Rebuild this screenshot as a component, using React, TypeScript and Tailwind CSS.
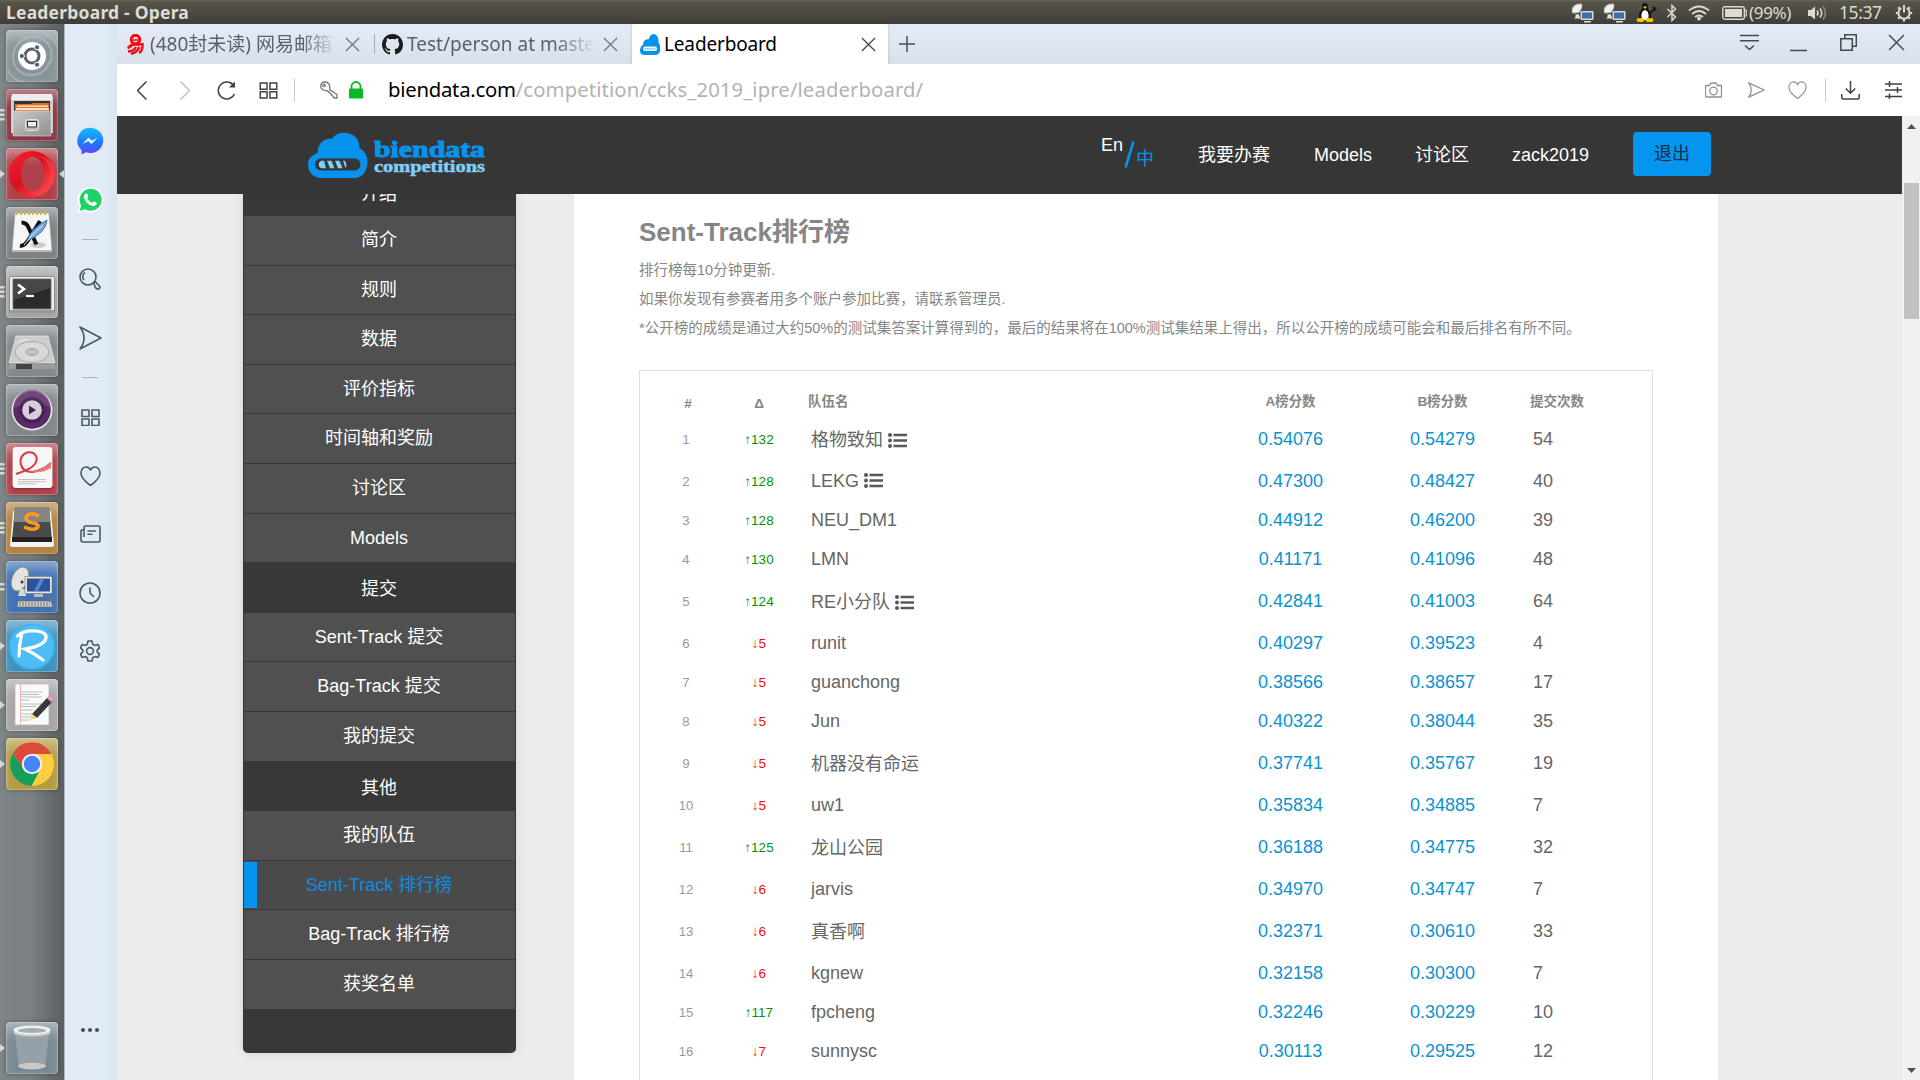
import React from "react";

const PAGE_FONT = "font-['Liberation_Sans','Noto_Sans_CJK_SC',sans-serif]";
const UI_FONT = "font-['Noto_Sans','Noto_Sans_CJK_SC',sans-serif]";

/* ---------- Desktop panel ---------- */

function DishIcon() {
  return (
    <svg width="24" height="20" viewBox="0 0 24 20">
      <path d="M1.500 10C0 4 4 .5 10.500 1Q12 4 8 9.500Z" fill="#efefeb" stroke="#c9c9c5" strokeWidth=".6" />
      <path d="M1.500 10q2 2.500 6 1l2 4.500H3.500l1.500-3z" fill="#e4e4e0" />
      <rect x="9.500" y="8" width="13" height="9" rx="1" fill="#d8d8d4" />
      <rect x="11" y="9.500" width="10" height="6" fill="#3d6db0" />
      <path d="M13 18h7v1.500h-7z" fill="#ddd" />
    </svg>
  );
}

function TopPanel() {
  return (
    <div className={`flex h-6 w-full shrink-0 items-center border-t border-[#65624f] bg-gradient-to-b from-[#59574c] to-[#3e3d38] text-[#dfdbd2] ${UI_FONT}`}>
      <span className="ml-[6px] whitespace-nowrap text-[17.5px] leading-none font-bold tracking-[0.012em]">Leaderboard - Opera</span>
      <div className="ml-auto flex h-full items-center">
        <DishIcon />
        <span className="w-2" />
        <DishIcon />
        <svg className="ml-[9px]" width="22" height="21" viewBox="0 0 22 21">
          <path d="M9 1c3 0 3 3 3 5s3 4 3 8-2 5-6 5-6-1-6-5 3-6 3-8 0-5 3-5z" fill="#111" />
          <path d="M9 8c3 1 4 4 3.500 7S10 18 9 18s-3 0-3.500-3S6 9 9 8z" fill="#fff" />
          <path d="M7 5l2-1 2 1-2 2z" fill="#f5b800" />
          <ellipse cx="4.500" cy="18" rx="4" ry="2" fill="#f7c600" />
          <ellipse cx="13.500" cy="18" rx="4" ry="2" fill="#f7c600" />
          <path d="M13 12l7-6M17 5l3 3" stroke="#181818" strokeWidth="2" />
        </svg>
        <svg className="ml-[8px]" width="12" height="18" viewBox="0 0 12 18" fill="none" stroke="#dfdbd2" strokeWidth="1.500">
          <path d="M1.500 5l8 8L6 16.500v-15L9.500 5l-8 8" />
        </svg>
        <svg className="ml-[10px]" width="22" height="16" viewBox="0 0 22 16" fill="none" stroke="#dfdbd2" strokeWidth="1.800">
          <path d="M1 5.500Q11-2.500 21 5.500M4 9Q11 3 18 9M7 12Q11 9 15 12" />
          <circle cx="11" cy="13.500" r="1" fill="#dfdbd2" />
        </svg>
        <svg className="ml-[12px]" width="26" height="14" viewBox="0 0 26 14">
          <rect x=".8" y=".8" width="21.500" height="12.400" rx="2" fill="none" stroke="#dfdbd2" strokeWidth="1.400" />
          <rect x="3" y="3" width="17" height="8" fill="#dfdbd2" />
          <path d="M22.500 4h1.800v6h-1.800" fill="none" stroke="#dfdbd2" strokeWidth="1.200" />
        </svg>
        <span className="ml-px w-[46px] text-[17px] leading-none tracking-[-0.02em] whitespace-nowrap">(99%)</span>
        <svg className="ml-[12px]" width="21" height="16" viewBox="0 0 21 16" fill="none" stroke="#dfdbd2" strokeWidth="1.600">
          <path d="M1 5h3l4-3.500v13L4 11H1z" fill="#dfdbd2" stroke="none" />
          <path d="M10 5.500q2 2.500 0 5M13 3.500q3.500 4.500 0 9" />
          <path d="M16 1.500q5 6.500 0 13" stroke="#8d8a80" />
        </svg>
        <span className="ml-[11px] w-[44px] text-[17.5px] leading-none tracking-[-0.025em]">15:37</span>
        <svg className="mr-[7px] ml-[12px]" width="18" height="18" viewBox="0 0 18 18" fill="none" stroke="#dfdbd2">
          <path d="M6.200 4.200a5.600 5.600 0 1 0 5.600 0" strokeWidth="2" />
          <path d="M9 1v7.500" strokeWidth="2" />
          <path d="M.8 9h2M15.200 9h2M3.200 14.800l1.500-1.500M14.800 14.800l-1.500-1.500M3.200 3.200l1.500 1.500M14.800 3.200l-1.500 1.500M9 15v2.500" strokeWidth="2.200" />
        </svg>
      </div>
    </div>
  );
}

/* ---------- Launcher ---------- */

type Mark = "none" | "arrow" | "two" | "three";

function Tile({ bg, mark = "none", active, children }: { bg: string; mark?: Mark; active?: boolean; children: React.ReactNode }) {
  return (
    <div className={`relative ml-[6px] h-[52px] w-[52px] shrink-0 rounded-[4px] shadow-[0_0_4px_rgba(0,0,0,0.35),inset_0_0_0_1px_rgba(255,255,255,0.25),inset_0_12px_12px_-4px_rgba(255,255,255,0.4)] ${bg}`}>
      <svg width="52" height="52" viewBox="0 0 52 52" className="block">{children}</svg>
      {mark !== "none" && (
        <svg className="absolute top-[19px] left-[-6px]" width="5" height="14" viewBox="0 0 5 14" fill="#d6d6d6">
          {mark === "arrow" && <path d="M0 3l5 4-5 4z" />}
          {mark === "two" && <path d="M0 3h4l1 1.300-1 1.300H0zM0 8h4l1 1.300-1 1.300H0z" />}
          {mark === "three" && <path d="M0 1h4l1 1.200-1 1.300H0zM0 5.500h4l1 1.200L4 8H0zM0 10h4l1 1.200-1 1.300H0z" />}
        </svg>
      )}
      {active && (
        <svg className="absolute top-[21px] left-[53px]" width="5" height="10" viewBox="0 0 5 10"><path d="M5 1v8L0 5z" fill="#d6d6d6" /></svg>
      )}
    </div>
  );
}

function Launcher() {
  return (
    <div className="flex w-[65px] shrink-0 flex-col gap-[7px] border-r border-[#aeb3b5] bg-gradient-to-r from-[#7f8687] via-[#7a7f81] to-[#5a5f61] pt-[6px] pb-[6px]">
      <Tile bg="bg-[#87949a]">
        <path d="M8 20Q16 3 35 8Q50 16 44 34M44 32Q36 49 18 44Q4 37 8 20M2 40Q6 50 18 52M34 0Q46 6 52 16" fill="none" stroke="#b6c0c4" strokeWidth="2" opacity=".6" />
        <circle cx="26" cy="26" r="14" fill="#fff" />
        <circle cx="26" cy="26" r="7" fill="none" stroke="#566167" strokeWidth="3" />
        <g fill="#566167" stroke="#fff" strokeWidth="1">
          <circle cx="15.800" cy="26" r="2.600" />
          <circle cx="31" cy="17.300" r="2.600" />
          <circle cx="31" cy="34.700" r="2.600" />
        </g>
      </Tile>
      <Tile bg="bg-[#8c3645]" mark="three">
        <defs>
          <linearGradient id="cab" x1="0" y1="0" x2="1" y2="1"><stop offset="0" stopColor="#c9c9c9" /><stop offset="1" stopColor="#8f8f8f" /></linearGradient>
        </defs>
        <path d="M6 5h40l1 8v31H5V13z" fill="#cfcfcf" />
        <path d="M6 5h40l1 6H5z" fill="#ededed" />
        <rect x="8" y="12" width="36" height="11" fill="#333" />
        <path d="M9 15h16l1-1h17v8H9z" fill="#e0702a" />
        <path d="M11 16.500h31v1.500H11zM10 19h33v2H10z" fill="#fbe3c0" />
        <path d="M7 22h38v25H7z" fill="url(#cab)" stroke="#ddd" strokeWidth=".6" />
        <rect x="19.500" y="30.500" width="13" height="11" rx="2" fill="#b8b8b8" stroke="#e2e2e2" />
        <rect x="21.500" y="32.500" width="9" height="5.500" fill="#eee" stroke="#333" strokeWidth="1" />
      </Tile>
      <Tile bg="bg-[#ae4149]" mark="arrow" active>
        <defs>
          <linearGradient id="op" x1="0" y1="0" x2="1" y2="1"><stop offset="0" stopColor="#fb2337" /><stop offset=".45" stopColor="#d8101f" /><stop offset="1" stopColor="#ff5a5a" /></linearGradient>
        </defs>
        <path fillRule="evenodd" d="M26 3a23 23 0 1 0 0 46a23 23 0 1 0 0-46zM26.500 9c6.500 0 11.500 7 11.500 17s-5 17-11.500 17S15 36 15 26 20 9 26.500 9z" fill="url(#op)" />
        <path d="M21 11C28 5 44 8 44 25S30 46 21 42c10 7 28 2 28-16C49 12 35 3 21 11z" fill="#fb4048" opacity=".6" />
      </Tile>
      <Tile bg="bg-[#7e8285]">
        <path d="M9 6h34l3 38H6z" fill="#f6f6f6" stroke="#999" strokeWidth=".6" />
        <path d="M6 43h40v2H6z" fill="#bbb" />
        <path d="M11 8V4M15 8V4M19 8V4M23 8V4M27 8V4M31 8V4M35 8V4M39 8V4" stroke="#cdb64a" strokeWidth="2" />
        <ellipse cx="32" cy="38" rx="8" ry="3" fill="#ccc" />
        <path d="M15.500 15.500q5 0 7 5l8 17M14 38.500q4 1 8-5L34 14" fill="none" stroke="#111" strokeWidth="4" />
        <path d="M21 34Q24 22 41 13Q40 26 21 34z" fill="#7ba7d6" stroke="#3e6ea8" strokeWidth="1" />
        <path d="M18 38Q27 26 37 18" stroke="#dce9f7" fill="none" />
      </Tile>
      <Tile bg="bg-[#a4a4a4]" mark="three">
        <rect x="3.500" y="10.500" width="45" height="36" rx="1.500" fill="#efefef" stroke="#8a8a8a" />
        <path d="M4 44h44v3H4z" fill="#999" />
        <rect x="7" y="13" width="38" height="30" fill="#2b2b2b" stroke="#777" />
        <path d="M8 14h36v8L8 34z" fill="#474747" />
        <path d="M12 18.500l6 4.500-6 4.500" fill="none" stroke="#fff" strokeWidth="2.600" />
        <path d="M20 30h8" stroke="#fff" strokeWidth="2.200" />
      </Tile>
      <Tile bg="bg-[#838a8d]">
        <path d="M10 11h32l7 27H3z" fill="#cdcdcd" stroke="#eee" strokeWidth=".7" />
        <path d="M3 38h46v6H3z" fill="#9c9c9c" />
        <path d="M10 39h16v5H10z" fill="#444" />
        <ellipse cx="26" cy="27" rx="17" ry="10.500" fill="#d8d8d8" stroke="#aaa" />
        <ellipse cx="26" cy="27" rx="6" ry="3.200" fill="#c4c4c4" stroke="#999" />
        <path d="M11 19q4-5 12-4" stroke="#f2f2f2" fill="none" />
      </Tile>
      <Tile bg="bg-[#81888b]">
        <circle cx="26" cy="26" r="20.500" fill="#e6e3e8" />
        <circle cx="26" cy="26" r="18.800" fill="#5b2a66" />
        <path d="M7.500 24a18.500 18.500 0 0 1 37 0Q32 14 7.500 24z" fill="#77507f" opacity=".75" />
        <circle cx="26" cy="26" r="13" fill="#43184f" opacity=".6" />
        <circle cx="26" cy="26" r="9.800" fill="#d5cfd8" />
        <path d="M23 21.500v9l7-4.500z" fill="#4b1f58" />
      </Tile>
      <Tile bg="bg-[#b2414a]" mark="three">
        <rect x="6" y="4.500" width="41" height="42" rx="4" fill="#7a2a30" opacity=".6" />
        <rect x="6.500" y="4" width="40" height="41" rx="3.500" fill="#f7f7f7" />
        <path d="M10 31Q33 24 30.500 14Q28 8 21 9.500Q14 12 14.500 20Q16 29 26 29Q36 28 45 20" fill="none" stroke="#d83a3e" strokeWidth="2" />
        <path d="M22 28.500Q36 29 45 19v6q-9 6-23 3.500z" fill="#ea7a78" />
        <path d="M12 36.500h28M12 38.700h28M12 40.800h18" stroke="#bdbdbd" strokeWidth="1" />
      </Tile>
      <Tile bg="bg-[#b5813f]" mark="three">
        <path d="M7 9h38l3 34q0 2-2 2H6q-2 0-2-2z" fill="#f3f3f3" />
        <path d="M9 5h34l3 33H6z" fill="#4a4a4a" />
        <path d="M9 5h34l1.500 15H7.500z" fill="#858585" />
        <path d="M6 35h40v5H6z" fill="#222" />
        <path d="M33 14Q22 9 20 16Q20 20 28 21Q34 23 31 26Q26 29 18 25" fill="none" stroke="#ff9a1f" strokeWidth="3.600" />
      </Tile>
      <Tile bg="bg-[#3f72b5]" mark="two">
        <ellipse cx="14" cy="18" rx="8" ry="12.500" transform="rotate(24 14 18)" fill="#e3e3df" stroke="#8d8d88" />
        <path d="M14 28h5l1 7h-8z" fill="#d6d6d2" />
        <circle cx="16" cy="21" r="1.500" fill="#333" />
        <rect x="19" y="15.500" width="27" height="17" fill="#e6e6e2" stroke="#777" strokeWidth=".6" />
        <rect x="21" y="17.500" width="23" height="13" fill="#2c549c" />
        <path d="M28 30l6-12h4l-6 12z" fill="#5b84c4" />
        <path d="M28 33h9v3h-9z" fill="#bcbcb8" />
        <path d="M12 40h33l2 6H11z" fill="#cfcfcb" stroke="#666" strokeWidth=".7" />
        <path d="M13 42h31M13 44h31" stroke="#666" strokeDasharray="2 1" strokeWidth=".9" />
        <path d="M38 36q8-1 8 2t-4 2" fill="none" stroke="#777" />
      </Tile>
      <Tile bg="bg-[#3f92bf]" mark="arrow">
        <circle cx="26" cy="26.500" r="23" fill="#4dbdf8" />
        <circle cx="26" cy="26.500" r="22" fill="none" stroke="#2f9fe0" strokeWidth=".6" />
        <path d="M15.500 15Q13 26 13 36M11.500 16Q17 10 30 11Q41 12 40 18Q38 26 19 29Q28 33 37 40" fill="none" stroke="#fff" strokeWidth="3.200" strokeLinecap="round" />
      </Tile>
      <Tile bg="bg-[#a9a6a8]" mark="arrow">
        <path d="M9 5h34v41H9z" fill="#fafafa" stroke="#b8b8b8" strokeWidth=".8" />
        <path d="M14.500 5v41" stroke="#f3b6b6" />
        <path d="M15 13h21M15 15.500h18M15 18h21M15 21h8M15 25h21M15 27.500h15M15 31h12M15 35h14M15 38h10M15 41h8" stroke="#b4b4b4" strokeWidth=".9" />
        <path d="M26 35L41 19l5 4-15 16z" fill="#3a3a3a" />
        <path d="M41 19l3-3q3 1 4 4l-3 3z" fill="#e89ad0" stroke="#999" strokeWidth=".6" />
        <path d="M26 35l5 4-7 2z" fill="#eed977" />
      </Tile>
      <Tile bg="bg-[#b29d45]" mark="arrow">
        <circle cx="26" cy="26" r="22" fill="#ffcd40" />
        <path d="M7 15A22 22 0 0 1 45.500 16H26L17 31z" fill="#db4a3d" />
        <path d="M7 15A22 22 0 0 0 25.500 48L34 32H18z" fill="#159f5b" />
        <circle cx="26" cy="26" r="10.200" fill="#f3f3f3" />
        <circle cx="26" cy="26" r="8.200" fill="#4486f4" />
      </Tile>
      <div className="mt-auto">
        <Tile bg="bg-[#7a8a93]" mark="arrow">
          <path d="M9 12h34l-4 33q-13 5-26 0z" fill="#aab5ba" opacity=".55" />
          <ellipse cx="26" cy="44" rx="14" ry="3.200" fill="#c9c9c5" />
          <path d="M8 8v4q18 5 36 0V8z" fill="#cfcfcf" />
          <ellipse cx="26" cy="8" rx="18.500" ry="4.500" fill="#f1f1f1" />
          <ellipse cx="26" cy="8.500" rx="14" ry="2.500" fill="#a5adb0" />
        </Tile>
      </div>
    </div>
  );
}

/* ---------- Browser sidebar ---------- */

const GRID_PATH = "M1 1h7v6.500H1zM11 1h7v6.500h-7zM1 10h7v6.500H1zM11 10h7v6.500h-7z";
const HEART_PATH = "M10.500 19.500C5 15.500 1 12 1 7 1 3.500 3.300 1 6 1c2 0 3.700 1.200 4.500 3C11.300 2.200 13 1 15 1c2.700 0 5 2.500 5 6 0 5-4 8.500-9.500 12.500z";

function Slot({ children }: { children: React.ReactNode }) {
  return <div className="flex h-[58.5px] shrink-0 items-center justify-center">{children}</div>;
}

function BrowserSidebar() {
  const line = { fill: "none", stroke: "#4c5862", strokeWidth: 1.6 };
  return (
    <div className="flex w-[52px] shrink-0 flex-col bg-[linear-gradient(to_right,#e2ebf5_0%,#e2ebf5_75%,#d9e5f0_100%)] pt-[88px]">
      <div className="flex w-[50px] flex-1 flex-col">
        <Slot>
          <svg width="28" height="28" viewBox="0 0 28 28">
            <defs><linearGradient id="ms" x1="0" y1="0" x2="0" y2="1"><stop offset="0" stopColor="#12bdfa" /><stop offset=".6" stopColor="#2374ff" /><stop offset="1" stopColor="#6a3cf5" /></linearGradient></defs>
            <path d="M14 .8a13 12.600 0 1 1-4 24.500L5.500 27.500V23A12.800 12.800 0 0 1 14 .8z" fill="url(#ms)" />
            <path d="M6.500 17l6-6.300 3.300 3 5.700-3-6 6.200-3.200-3z" fill="#fff" />
          </svg>
        </Slot>
        <Slot>
          <svg width="28" height="28" viewBox="0 0 28 28">
            <path d="M14.500 1a12.600 12.600 0 1 1-6 23.600L1.500 27l2-7A12.600 12.600 0 0 1 14.500 1z" fill="#fff" />
            <path d="M14.500 2.800a11 11 0 1 1-5.500 20.400L3.500 25l1.700-5.500A11 11 0 0 1 14.500 2.800z" fill="#1fd266" />
            <path d="M10.500 7.500c1 0 1.500 2.200 1.800 3 .2.700-1 1.400-1 1.900 1 2 2.500 3.500 4.600 4.400.6 0 1.300-1.500 1.900-1.400.8.300 3 1.200 3 1.700 0 2-1.700 3.200-3.700 3-4.400-.8-8.300-4.600-9.200-8.800-.2-1.900 1-3.800 2.600-3.800z" fill="#fff" />
          </svg>
        </Slot>
        <div className="flex h-[21px] shrink-0 items-center justify-center"><div className="h-px w-4 bg-[#a9b5c0]" /></div>
        <Slot>
          <svg width="22" height="22" viewBox="0 0 22 22" {...line}>
            <circle cx="9" cy="9" r="8" />
            <path d="M5 12a5 5 0 0 1 1-7.500M14.700 14.500l1.500 5 2.300 1.700q2.500-.3 2.500-2.500L16.500 14z" />
          </svg>
        </Slot>
        <Slot>
          <svg width="24" height="24" viewBox="0 0 24 24" {...line} strokeLinejoin="round"><path d="M2 1l21 11L2 23q8-11 0-22z" /></svg>
        </Slot>
        <div className="flex h-[21px] shrink-0 items-center justify-center"><div className="h-px w-4 bg-[#a9b5c0]" /></div>
        <Slot>
          <svg width="19" height="17.500" viewBox="0 0 19 17.500" {...line} strokeLinejoin="round"><path d={GRID_PATH} /></svg>
        </Slot>
        <Slot>
          <svg width="21" height="20.500" viewBox="0 0 21 20.500" {...line} strokeLinejoin="round"><path d={HEART_PATH} /></svg>
        </Slot>
        <Slot>
          <svg width="21" height="18" viewBox="0 0 21 18" {...line} strokeLinejoin="round">
            <path d="M4 12V2.500Q4 1 5.500 1h13Q20 1 20 2.500v13q0 1.500-1.500 1.500H3q-2 0-2-2V6q0-1.500 3-1.500M7.500 6h8.500M7.500 9.300h5" />
          </svg>
        </Slot>
        <Slot>
          <svg width="22" height="22" viewBox="0 0 22 22" {...line}><circle cx="11" cy="11" r="10" /><path d="M11 5.500V11l4 4" /></svg>
        </Slot>
        <Slot>
          <svg width="20" height="22" viewBox="0 0 20 22" {...line} strokeLinejoin="round">
            <circle cx="10" cy="11" r="3.400" />
            <path d="M8 1h4l.7 3.200 2 1.200L18 4.500l1.500 3.300-2.300 2.300v1.800l2.300 2.300L18 17.500l-3.300-.9-2 1.200L12 21H8l-.7-3.200-2-1.200-3.300.9-1.500-3.300 2.300-2.300v-1.800L.5 7.800 2 4.500l3.300.9 2-1.200z" />
          </svg>
        </Slot>
        <div className="mt-auto flex justify-center gap-[3px] pb-[48px]">
          <div className="size-1 rounded-full bg-[#414d57]" />
          <div className="size-1 rounded-full bg-[#414d57]" />
          <div className="size-1 rounded-full bg-[#414d57]" />
        </div>
      </div>
    </div>
  );
}

/* ---------- Tabs and address bar ---------- */

function Cross({ size, color }: { size: number; color: string }) {
  return (
    <svg width={size} height={size} viewBox="0 0 16 16" fill="none" stroke={color} strokeWidth="1.400" className="shrink-0"><path d="M1 1l14 14M15 1L1 15" /></svg>
  );
}

function TabStrip() {
  return (
    <div className={`flex h-10 shrink-0 bg-gradient-to-b from-[#e3ecf6] via-[#dee7f1] to-[#d9dfeb] text-[19px] leading-[40px] ${UI_FONT}`}>
      <div className="flex w-[258px] shrink-0 items-center">
        <svg className="ml-[10px] shrink-0" width="17" height="21" viewBox="0 0 17 21" fill="none" stroke="#f50a12" strokeWidth="2.400">
          <circle cx="8.500" cy="5.500" r="4.200" strokeWidth="3" />
          <path d="M6 6h5" strokeWidth="1.500" />
          <path d="M1 13.500q4-4 9-2.800l5.500-.7q.5 7-3.500 9M5 10q-1 3-4.500 4M9 13q-2 4-8 4.500M12.500 13q-2 5-8.500 7" />
        </svg>
        <span className="ml-[6px] w-[186px] overflow-hidden whitespace-nowrap text-[#5c6167] [mask-image:linear-gradient(to_right,black_82%,transparent)]">(480封未读) 网易邮箱</span>
        <span className="ml-[9px] flex"><Cross size={15} color="#73797f" /></span>
        <span className="ml-auto h-5 w-px bg-[#a7adb5]" />
      </div>
      <div className="flex w-[257px] shrink-0 items-center">
        <svg className="ml-[7px] shrink-0" width="21" height="21" viewBox="0 0 16 16" fill="#1b1b1b">
          <path d="M8 0C3.580 0 0 3.580 0 8c0 3.540 2.290 6.530 5.470 7.590.4.070.55-.17.55-.38 0-.19-.01-.82-.01-1.490-2.010.37-2.530-.49-2.690-.94-.09-.23-.48-.94-.82-1.130-.28-.15-.68-.52-.01-.53.63-.01 1.080.58 1.230.82.72 1.210 1.870.87 2.330.66.07-.52.28-.87.51-1.070-1.780-.2-3.640-.89-3.640-3.950 0-.87.31-1.590.82-2.150-.08-.2-.36-1.020.08-2.120 0 0 .67-.21 2.200.82.64-.18 1.320-.27 2-.27s1.360.09 2 .27c1.530-1.040 2.200-.82 2.200-.82.44 1.100.16 1.920.08 2.120.51.56.82 1.270.82 2.150 0 3.070-1.870 3.750-3.650 3.950.29.25.54.73.54 1.480 0 1.070-.01 1.930-.01 2.200 0 .21.15.46.55.38A8.010 8.010 0 0 0 16 8c0-4.420-3.580-8-8-8z" />
        </svg>
        <span className="ml-[4px] w-[188px] overflow-hidden whitespace-nowrap text-[#5c6167] [mask-image:linear-gradient(to_right,black_78%,transparent)]">Test/person at maste</span>
        <span className="ml-[8px] flex"><Cross size={15} color="#73797f" /></span>
      </div>
      <div className="flex w-[256px] shrink-0 items-center rounded-t-[2px] bg-white shadow-[0_0_3px_rgba(0,0,0,0.2)]">
        <svg className="ml-[8px] shrink-0" width="20" height="21" viewBox="0 0 20 21">
          <path d="M3 11q0-6 6-6Q10 0 14 0q5 1 4.500 8.500Q20 10 20 14v3q-1 4-5 4H5q-5 0-5-4.500Q0 12 3 11z" fill="#0693ee" />
          <rect x="3" y="12.500" width="14" height="4.500" rx="2" fill="#e8f6ff" />
          <path d="M4.500 14.800h11" stroke="#69bdf0" strokeDasharray="1.500 1" strokeWidth="1.500" />
        </svg>
        <span className="ml-[4px] tracking-[-0.008em] text-black">Leaderboard</span>
        <span className="mr-[12px] ml-auto flex"><Cross size={15} color="#45494c" /></span>
      </div>
      <svg className="mt-3 ml-[11px] shrink-0" width="16" height="16" viewBox="0 0 16 16" fill="none" stroke="#4a4f53" strokeWidth="1.500"><path d="M8 0v16M0 8h16" /></svg>
      <div className="mr-[15px] ml-auto flex items-start pt-[10px]">
        <svg width="19" height="17" viewBox="0 0 19 17" fill="none" stroke="#45494d" strokeWidth="1.500"><path d="M0 1.500h19M0 6.800h19M5 11.500l4.500 4 4.500-4" /></svg>
        <svg className="ml-[31px]" width="17" height="18" viewBox="0 0 17 18" stroke="#45494d" strokeWidth="1.500"><path d="M0 16.500h17" /></svg>
        <svg className="ml-[33px]" width="17" height="17" viewBox="0 0 17 17" fill="none" stroke="#45494d" strokeWidth="1.500"><path d="M.8 4.800h11.500v11.500H.8zM4.800 4.800V.8h11.500v11.500h-4" /></svg>
        <span className="ml-[31px]"><Cross size={17} color="#45494d" /></span>
      </div>
    </div>
  );
}

function AddressBar() {
  const dark = { fill: "none", stroke: "#3d4145", strokeWidth: 1.5 };
  const soft = { fill: "none", stroke: "#8e9194", strokeWidth: 1.3 };
  return (
    <div className={`flex h-[52px] shrink-0 items-center rounded-tl-[2px] bg-white ${UI_FONT}`}>
      <svg className="ml-[20px]" width="10" height="19" viewBox="0 0 10 19" {...dark}><path d="M9.500.5l-9 9 9 9" /></svg>
      <svg className="ml-[33px]" width="10" height="19" viewBox="0 0 10 19" {...dark} stroke="#bfc1c3"><path d="M.5.5l9 9-9 9" /></svg>
      <svg className="ml-[27px]" width="20" height="19" viewBox="0 0 20 19" {...dark}><path d="M17.500 13A8.500 8.500 0 1 1 17 5" /><path d="M18 0.500v6h-6z" fill="#3d4145" stroke="none" /></svg>
      <svg className="ml-[22px]" width="19" height="17" viewBox="0 0 19 17.500" {...dark}><path d={GRID_PATH} /></svg>
      <span className="ml-4 h-6 w-px bg-[#c9c9c9]" />
      <svg className="ml-[25px]" width="18" height="18" viewBox="0 0 18 18" {...soft} stroke="#777"><path d="M9.800 8.800Q10.500 1 5 1 1 1 .7 5q0 4.500 7 5l5.500 5.500.8 1.500h3v-3.500z" /><circle cx="4" cy="4.300" r="1.200" /></svg>
      <svg className="ml-[11px]" width="14" height="18" viewBox="0 0 14 18"><rect y="7.500" width="14" height="10" rx="1" fill="#05ba22" /><path d="M2.500 8V5.500a4.500 4.500 0 0 1 9 0V8" fill="none" stroke="#05ba22" strokeWidth="1.800" /></svg>
      <span className="mb-[2px] ml-[25px] text-[20.3px] leading-none tracking-[0.005em] whitespace-nowrap text-[#b3b3b3]"><span className="tracking-[-0.012em] text-black">biendata.com</span>/competition/ccks_2019_ipre/leaderboard/</span>
      <div className="mr-[18px] ml-auto flex items-center">
        <svg width="17" height="16" viewBox="0 0 17 16" {...soft}><path d="M1 3.500h3.500L6 1h5l1.500 2.500H16q.5 0 .5.500v10.500q0 .5-.5.500H1q-.5 0-.5-.5V4q0-.5.500-.5z" /><circle cx="8.500" cy="9" r="3.800" /></svg>
        <svg className="ml-[26px]" width="17" height="16" viewBox="0 0 17 16" {...soft}><path d="M.8.8L16 8 .8 15.200q5-7 0-14.400z" /></svg>
        <svg className="ml-[23px]" width="19" height="18.500" viewBox="0 0 21 20.500" {...soft}><path d={HEART_PATH} /></svg>
        <span className="ml-[18px] h-6 w-px bg-[#c9c9c9]" />
        <svg className="ml-[15px]" width="19" height="19" viewBox="0 0 19 19" {...dark}><path d="M9.500 0v12M4.800 7.500l4.700 4.700 4.700-4.700M.8 13v3.500Q.8 18 2.300 18h14.400q1.500 0 1.500-1.500V13" /></svg>
        <svg className="ml-[25px]" width="17" height="18" viewBox="0 0 17 18" {...dark}><path d="M0 3h17M0 9h17M0 15.500h17M4.500 0v6M12.500 6v6M4.500 12.500v5.500" /></svg>
      </div>
    </div>
  );
}

/* ---------- Web page ---------- */

function SiteHeader() {
  return (
    <div className="flex h-[78px] shrink-0 bg-[#363636] text-[18px] leading-[78px] whitespace-nowrap text-white">
      <svg className="mt-[16px] ml-[191px] shrink-0" width="178" height="48" viewBox="0 0 178 48">
        <path d="M9.500 21Q10 7 24 6.500Q28 .8 37 .8Q51 2 51.500 16Q60 21 59.500 31Q58 45.500 46 46H13Q1 45 0 33Q0 24 9.500 21z" fill="#0693ee" />
        <rect x="7" y="26.500" width="45.500" height="12" rx="6" fill="#363636" />
        <path d="M16 28.700h-2.500a4 4 0 0 0 0 7.600H18zM19 28.700h4.500l3 7.600H22zM27 28.700h4.500l3 7.600H30zM35 28.700h2q2.500 4 .5 7.600z" fill="#7fd0f7" />
        <g className="font-['Liberation_Serif',serif] font-bold">
          <text x="66" y="25" fontSize="24" textLength="111" lengthAdjust="spacingAndGlyphs" fill="#0693ee" stroke="#0693ee" strokeWidth="1">biendata</text>
          <text x="66" y="40" fontSize="17.500" textLength="111" lengthAdjust="spacingAndGlyphs" fill="#7fd0f7" stroke="#7fd0f7" strokeWidth=".5">competitions</text>
        </g>
      </svg>
      <div className="ml-[615px] flex w-[54px] shrink-0">
        <span className="h-[60px] leading-[59px]">En</span>
        <svg className="mt-[25px] ml-px" width="11" height="27" viewBox="0 0 11 27"><path d="M1.500 26.500L9.500.5" stroke="#0693ee" strokeWidth="2.600" /></svg>
        <span className="ml-px leading-[87px] text-[#0693ee]">中</span>
      </div>
      <span className="ml-[43px] w-[116px] shrink-0 leading-[78px]">我要办赛</span>
      <span className="w-[101px] shrink-0">Models</span>
      <span className="w-[97px] shrink-0 leading-[78px]">讨论区</span>
      <span className="w-[121px] shrink-0">zack2019</span>
      <span className="mt-4 h-[44px] w-[78px] shrink-0 rounded-[4px] bg-[#0495ee] text-center leading-[45px] text-[#17304a]">退出</span>
    </div>
  );
}

const MENU: { label: string; kind?: "head" | "active" }[] = [
  { label: "简介" },
  { label: "规则" },
  { label: "数据" },
  { label: "评价指标" },
  { label: "时间轴和奖励" },
  { label: "讨论区" },
  { label: "Models" },
  { label: "提交", kind: "head" },
  { label: "Sent-Track 提交" },
  { label: "Bag-Track 提交" },
  { label: "我的提交" },
  { label: "其他", kind: "head" },
  { label: "我的队伍" },
  { label: "Sent-Track 排行榜", kind: "active" },
  { label: "Bag-Track 排行榜" },
  { label: "获奖名单" },
];

function SideMenu() {
  return (
    <div className="ml-[126px] flex h-[859px] w-[273px] shrink-0 flex-col overflow-hidden rounded-b-[5px] border-r border-l border-[#343434] bg-[#383838] text-center text-[18px] text-white shadow-[0_0_12px_rgba(0,0,0,0.1)]">
      <div className="flex h-[22px] shrink-0 items-end justify-center overflow-hidden pr-px"><span className="h-[35px] leading-[26px]">介绍</span></div>
      {MENU.map((m) =>
        m.kind === "head" ? (
          <div key={m.label} className="h-[49.6px] shrink-0 pr-px leading-[53px]">{m.label}</div>
        ) : m.kind === "active" ? (
          <div key={m.label} className="flex h-[49.6px] shrink-0 border-b border-[#383838] bg-[#4a4a4a] leading-[49px] text-[#0e8ce4]">
            <span className="mt-px mb-px w-[13px] bg-[#0693ee]" />
            <span className="mr-[14px] flex-1">{m.label}</span>
          </div>
        ) : (
          <div key={m.label} className="h-[49.6px] shrink-0 border-b border-[#383838] bg-[#505050] pr-px leading-[49px]">{m.label}</div>
        ),
      )}
    </div>
  );
}

type Row = { d: number; name: string; a: string; b: string; n: number; list?: boolean; tall?: boolean };

const ROWS: Row[] = [
  { d: 132, name: "格物致知", a: "0.54076", b: "0.54279", n: 54, list: true, tall: true },
  { d: 128, name: "LEKG", a: "0.47300", b: "0.48427", n: 40, list: true },
  { d: 128, name: "NEU_DM1", a: "0.44912", b: "0.46200", n: 39 },
  { d: 130, name: "LMN", a: "0.41171", b: "0.41096", n: 48 },
  { d: 124, name: "RE小分队", a: "0.42841", b: "0.41003", n: 64, list: true, tall: true },
  { d: -5, name: "runit", a: "0.40297", b: "0.39523", n: 4 },
  { d: -5, name: "guanchong", a: "0.38566", b: "0.38657", n: 17 },
  { d: -5, name: "Jun", a: "0.40322", b: "0.38044", n: 35 },
  { d: -5, name: "机器没有命运", a: "0.37741", b: "0.35767", n: 19, tall: true },
  { d: -5, name: "uw1", a: "0.35834", b: "0.34885", n: 7 },
  { d: 125, name: "龙山公园", a: "0.36188", b: "0.34775", n: 32, tall: true },
  { d: -6, name: "jarvis", a: "0.34970", b: "0.34747", n: 7 },
  { d: -6, name: "真香啊", a: "0.32371", b: "0.30610", n: 33, tall: true },
  { d: -6, name: "kgnew", a: "0.32158", b: "0.30300", n: 7 },
  { d: 117, name: "fpcheng", a: "0.32246", b: "0.30229", n: 10 },
  { d: -7, name: "sunnysc", a: "0.30113", b: "0.29525", n: 12 },
];

const COLS = "grid grid-cols-[92px_54px_428px_152px_152px_1fr]";

function ListIcon() {
  return (
    <svg width="19" height="15" viewBox="0 0 19 15" fill="#58585a">
      <circle cx="2" cy="2" r="2" /><circle cx="2" cy="7.500" r="2" /><circle cx="2" cy="13" r="2" />
      <path d="M5.500.7H19v2.600H5.500zM5.500 6.200H19v2.600H5.500zM5.500 11.700H19v2.600H5.500z" />
    </svg>
  );
}

function Board() {
  return (
    <div className="ml-[58px] w-[1144px] shrink-0 bg-white pl-[65px] text-[#868686]">
      <h1 className="mt-[22px] text-[26px] leading-[32px] font-bold">Sent-Track排行榜</h1>
      <div className="mt-[8px] text-[14.5px] leading-[29px] whitespace-nowrap">
        <p>排行榜每10分钟更新.</p>
        <p>如果你发现有参赛者用多个账户参加比赛，请联系管理员.</p>
        <p>*公开榜的成绩是通过大约50%的测试集答案计算得到的，最后的结果将在100%测试集结果上得出，所以公开榜的成绩可能会和最后排名有所不同。</p>
      </div>
      <div className="mt-[27px] h-[800px] w-[1014px] border border-[#e0e0e0]">
        <div className={`h-[45.5px] pt-[20px] text-[13.5px] leading-[20px] font-bold ${COLS}`}>
          <span className="pt-[3px] pl-[4px] text-center">#</span>
          <span className="pt-[3px] text-center">Δ</span>
          <span className="pt-px pl-[22px]">队伍名</span>
          <span className="pt-px pl-px text-center">A榜分数</span>
          <span className="pt-px pl-px text-center">B榜分数</span>
          <span className="pt-px pl-[12px]">提交次数</span>
        </div>
        {ROWS.map((r, i) => (
          <div key={r.name} className={`items-center text-[18px] leading-[27px] ${r.tall ? "h-[45px]" : "h-[39px]"} ${COLS}`}>
            <span className="text-center text-[13.2px] text-[#9a9a9a]">{i + 1}</span>
            <span className={`text-center text-[13.5px] ${r.d > 0 ? "text-[#079007]" : "text-[#f50b0b]"}`}>{r.d > 0 ? "↑" : "↓"}{Math.abs(r.d)}</span>
            <span className={`flex items-center gap-[5px] pl-[25px] text-[#666] ${r.tall ? "pt-[3px]" : ""}`}>{r.name}{r.list && <span className="pb-px"><ListIcon /></span>}</span>
            <span className="pl-px text-center text-[#0b93cf]">{r.a}</span>
            <span className="pl-px text-center text-[#0b93cf]">{r.b}</span>
            <span className="pl-[15px] text-[#666]">{r.n}</span>
          </div>
        ))}
      </div>
    </div>
  );
}

function ScrollBar() {
  return (
    <div className="flex w-[18px] shrink-0 flex-col items-center bg-[#f1f1f1]">
      <svg className="mt-2" width="9" height="5" viewBox="0 0 9 5"><path d="M0 5L4.500 0 9 5z" fill="#505050" /></svg>
      <div className="mt-[54px] h-[136px] w-[15px] bg-[#c1c1c1]" />
      <svg className="mt-auto mb-[7px]" width="9" height="5" viewBox="0 0 9 5"><path d="M0 0L4.500 5 9 0z" fill="#505050" /></svg>
    </div>
  );
}

export default function App() {
  return (
    <div className="flex h-[1080px] w-[1920px] flex-col overflow-hidden bg-[#ececec]">
      <TopPanel />
      <div className="flex min-h-0 flex-1">
        <Launcher />
        <BrowserSidebar />
        <div className="flex min-w-0 flex-1 flex-col">
          <TabStrip />
          <AddressBar />
          <div className={`flex min-h-0 flex-1 ${PAGE_FONT}`}>
            <div className="flex w-[1785px] shrink-0 flex-col overflow-hidden">
              <SiteHeader />
              <div className="flex min-h-0 flex-1 items-start overflow-hidden bg-[#ececec]">
                <SideMenu />
                <Board />
              </div>
            </div>
            <ScrollBar />
          </div>
        </div>
      </div>
    </div>
  );
}
